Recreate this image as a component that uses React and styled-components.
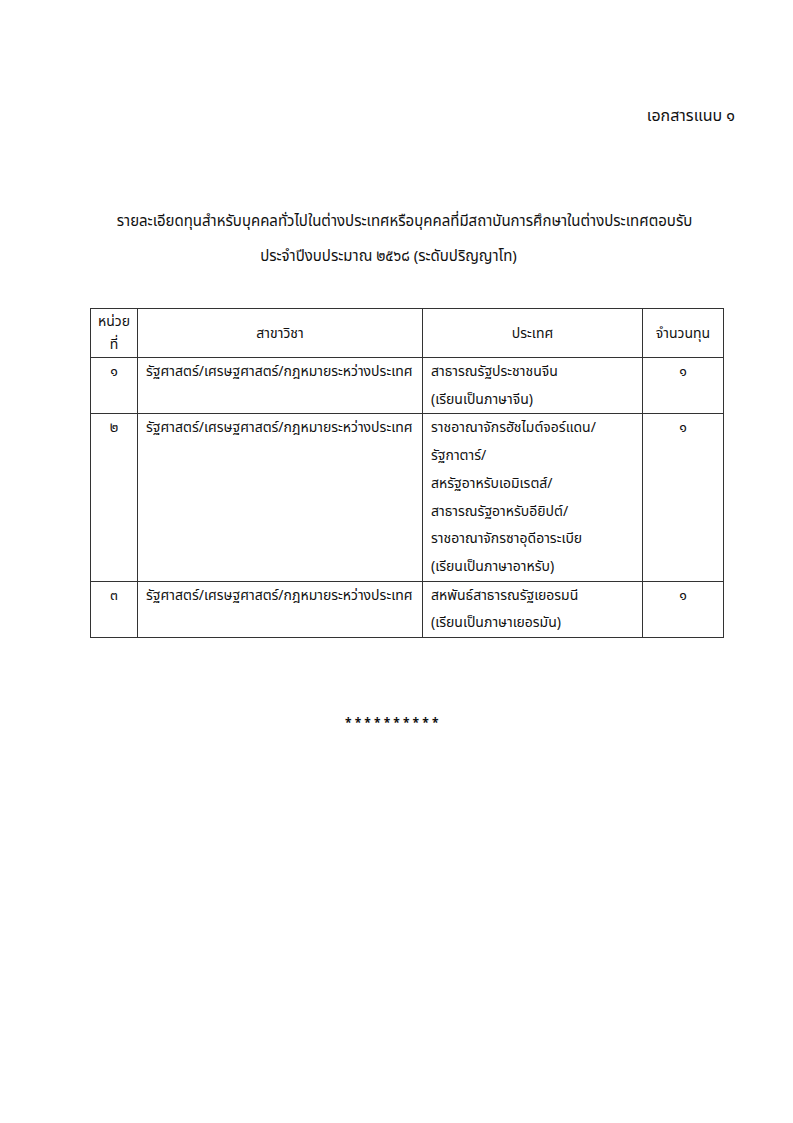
import React from 'react';
import styled, { createGlobalStyle } from 'styled-components';

const GlobalStyle = createGlobalStyle`
  html, body {
    margin: 0;
    padding: 0;
    background: #ffffff;
  }
  body {
    font-family: "Noto Sans Thai", "Noto Sans", "DejaVu Sans", sans-serif;
    color: #111;
  }
`;

const rows = [
  {
    no: '๑',
    field: 'รัฐศาสตร์/เศรษฐศาสตร์/กฎหมายระหว่างประเทศ',
    countries: ['สาธารณรัฐประชาชนจีน', '(เรียนเป็นภาษาจีน)'],
    count: '๑'
  },
  {
    no: '๒',
    field: 'รัฐศาสตร์/เศรษฐศาสตร์/กฎหมายระหว่างประเทศ',
    countries: [
      'ราชอาณาจักรฮัชไมต์จอร์แดน/',
      'รัฐกาตาร์/',
      'สหรัฐอาหรับเอมิเรตส์/',
      'สาธารณรัฐอาหรับอียิปต์/',
      'ราชอาณาจักรซาอุดีอาระเบีย',
      '(เรียนเป็นภาษาอาหรับ)'
    ],
    count: '๑'
  },
  {
    no: '๓',
    field: 'รัฐศาสตร์/เศรษฐศาสตร์/กฎหมายระหว่างประเทศ',
    countries: ['สหพันธ์สาธารณรัฐเยอรมนี', '(เรียนเป็นภาษาเยอรมัน)'],
    count: '๑'
  }
];

const App = () => {
  return (
    <Page>
      <GlobalStyle />
      <Attachment>เอกสารแนบ ๑</Attachment>

      <Heading>
        <HeadingLine shift={-16}>รายละเอียดทุนสำหรับบุคคลทั่วไปในต่างประเทศหรือบุคคลที่มีสถาบันการศึกษาในต่างประเทศตอบรับ</HeadingLine>
        <HeadingLine shift={16}>ประจำปีงบประมาณ ๒๕๖๘ (ระดับปริญญาโท)</HeadingLine>
      </Heading>

      <Table>
        <colgroup>
          <col style={{ width: 47 }} />
          <col style={{ width: 285 }} />
          <col style={{ width: 220 }} />
          <col style={{ width: 81 }} />
        </colgroup>
        <thead>
          <tr>
            <HeadCell>หน่วย<br />ที่</HeadCell>
            <HeadCell>สาขาวิชา</HeadCell>
            <HeadCell>ประเทศ</HeadCell>
            <HeadCell>จำนวนทุน</HeadCell>
          </tr>
        </thead>
        <tbody>
          {rows.map((row) => (
            <tr key={row.no}>
              <Cell center>{row.no}</Cell>
              <Cell>{row.field}</Cell>
              <Cell>
                {row.countries.map((c) => (
                  <Line key={c}>{c}</Line>
                ))}
              </Cell>
              <Cell center>{row.count}</Cell>
            </tr>
          ))}
        </tbody>
      </Table>

      <Stars>{'* * * * * * * * * *'}</Stars>
    </Page>
  );
};

// Styled Components
const Page = styled.div`
  width: 793px;
  min-height: 1123px;
  box-sizing: border-box;
  padding: 104px 58px 0 90px;
  display: flex;
  flex-direction: column;
`;

const Attachment = styled.div`
  align-self: flex-end;
  font-size: 16px;
  line-height: 24px;
`;

const Heading = styled.div`
  margin-top: 82px;
  margin-right: -58px;
  margin-left: -90px;
  display: flex;
  flex-direction: column;
  align-items: center;
  gap: 11px;
`;

const HeadingLine = styled.div`
  font-size: 15px;
  line-height: 24px;
  white-space: nowrap;
  padding-left: ${(p) => (p.shift < 0 ? -p.shift : 0)}px;
  padding-right: ${(p) => (p.shift > 0 ? p.shift : 0)}px;
`;

const Table = styled.table`
  margin-top: 39px;
  width: 634px;
  border-collapse: collapse;
  table-layout: fixed;
  font-size: 14px;
`;

const HeadCell = styled.th`
  border: 1px solid #333;
  font-weight: 400;
  height: 48px;
  padding: 0;
  line-height: 23px;
  text-align: center;
  vertical-align: middle;
`;

const Cell = styled.td`
  border: 1px solid #333;
  padding: 0 8px;
  line-height: 27.7px;
  vertical-align: top;
  text-align: ${(p) => (p.center ? 'center' : 'left')};
  white-space: nowrap;
`;

const Line = styled.div``;

const Stars = styled.div`
  margin-top: 77px;
  margin-left: 255px;
  font-size: 12px;
  font-weight: 700;
  line-height: 16px;
`;

export default App;
